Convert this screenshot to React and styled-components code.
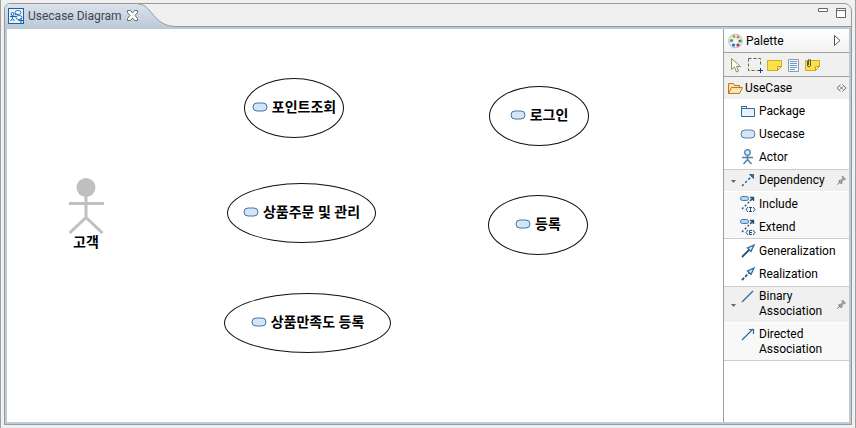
import React from "react";
import styled, { createGlobalStyle } from "styled-components";

const GlobalStyle = createGlobalStyle`
  * { box-sizing: border-box; }
  html, body, #root { height: 100%; }
  body {
    margin: 0;
    background: #f0f0f0;
    color: #000;
    font: 12px/16px Roboto, "Noto Sans CJK KR", sans-serif;
  }
  button { font: inherit; color: inherit; border: 0; padding: 0; background: none; text-align: left; }
  svg { display: block; flex: none; }
`;

const Desktop = styled.div`
  display: flex;
  flex-direction: column;
  height: 100%;
  padding: 3px;
  border: solid #a0a0a0;
  border-width: 0 1px;
`;

const Editor = styled.main`
  flex: 1;
  min-height: 0;
  display: flex;
  flex-direction: column;
  border: 1px solid #999;
  border-radius: 6px 8px 0 0;
  background: #bccad8;
`;

const TabBar = styled.header`
  display: flex;
  height: 23px;
  background: #f0f0f0;
  border-radius: 5px 7px 0 0;
`;

const Tab = styled.div`
  display: flex;
  align-items: center;
  width: 133px;
  padding: 0 0 0 3px;
  gap: 4px;
  border-radius: 5px 0 0 0;
  background: linear-gradient(#dbe3eb, #bccad8);
  color: #3f4654;
  white-space: nowrap;
`;

const TabTitle = styled.h1`
  margin: 0;
  flex: 1;
  font-size: 12px;
  font-weight: 400;
`;

const BarEnd = styled.div`
  flex: 1;
  display: flex;
  justify-content: flex-end;
  gap: 8px;
  padding: 4px 5px 0 0;
  border-bottom: 1px solid #999;
`;

const WindowButton = styled.button`
  display: flex;
  height: 11px;
`;

const Workspace = styled.div`
  flex: 1;
  min-height: 0;
  display: flex;
  margin: 2px;
  background: #fff;
`;

const Canvas = styled.section`
  position: relative;
  flex: 1;
  min-width: 0;
  overflow: hidden;
`;

const ActorNode = styled.figure`
  position: absolute;
  left: ${(p) => p.$x}px;
  top: ${(p) => p.$y}px;
  margin: 0;
  display: flex;
  flex-direction: column;
  align-items: center;
  font-weight: 700;
  font-size: 14px;
`;

const UsecaseNode = styled.div`
  position: absolute;
  left: ${(p) => p.$x}px;
  top: ${(p) => p.$y}px;
  width: ${(p) => p.$w}px;
  height: 60px;
  display: flex;
  align-items: center;
  justify-content: center;
  gap: 4px;
  padding-bottom: 2px;
  border: 1px solid #111;
  border-radius: 50%;
  font-weight: 700;
  font-size: 14px;
  white-space: nowrap;
`;

const Palette = styled.aside`
  width: 126px;
  border-left: 1px solid #a0a0a0;
`;

const PaletteHeader = styled.div`
  display: flex;
  align-items: center;
  gap: 2px;
  height: 24px;
  padding: 0 8px 0 4px;
  background: linear-gradient(#fff, #f2f2f2);
  border-bottom: 1px solid #a0a0a0;
`;

const Grow = styled.span`
  flex: 1;
`;

const Tools = styled.div`
  display: flex;
  align-items: center;
  gap: 3px;
  height: 24px;
  padding: 0 4px;
  background: #f0f0f0;
  border-bottom: 1px solid #a0a0a0;
`;

const Drawer = styled.button`
  display: flex;
  align-items: center;
  gap: 2px;
  width: 100%;
  height: 22px;
  padding: 0 2px 0 3px;
  background: #f0f0f0;
`;

const Group = styled.div`
  padding: ${(p) => (p.$stack ? "0" : "0 0 1px")};
  border-bottom: 1px solid #ccc;
  background: ${(p) => (p.$stack ? "#f8f8f8" : "#fff")};
`;

const Entry = styled.button`
  display: flex;
  align-items: flex-start;
  width: 100%;
  padding: ${(p) => (p.$head ? "2px" : "4px")} 3px 3px 0;
  background: ${(p) => (p.$head ? "#f0f0f0" : "transparent")};
  border-bottom: ${(p) => (p.$head ? "1px solid #fff" : "0")};
  line-height: ${(p) => (p.$tall ? "15px" : "16px")};
`;

const Arrow = styled.span`
  width: 16px;
  align-self: center;
  display: flex;
  justify-content: flex-end;
  padding: 3px 4px 0 0;
`;

const Label = styled.span`
  flex: 1;
  padding-left: 3px;
`;

const PinSlot = styled.span`
  align-self: center;
`;

const Icon = ({ w = 16, h = 16, children }) => (
  <svg width={w} height={h} viewBox={`0 0 ${w} ${h}`} fill="none" aria-hidden="true">{children}</svg>
);

const B = "#2c6a9c";
const N = "#23527c";

const UsecaseGlyph = () => (
  <Icon h={10}><rect x="1" y="1" width="14" height="8" rx="4" fill="#d6e5f5" stroke="#3c79ae" /></Icon>
);

const Dependent = ({ letter }) => (
  <Icon>
    <rect x=".5" y=".5" width="8" height="4" rx="2" fill="#b9d5ef" stroke="#3c79ae" />
    <path d="M2 13 11 4" stroke={N} strokeWidth="1.4" strokeDasharray="2 2" />
    <path d="M10 1.5h3.500V5M13 2l-3 3" stroke={N} strokeWidth="1.4" />
    <path d="m8 11-2 2.500L8 16M13 11l2 2.500L13 16" stroke={N} />
    {letter === "I"
      ? <path d="M9 11.500h3M9 15.500h3M10.500 11.500v4" stroke={N} />
      : <path d="M12 11.500H9.500v4H12M9.500 13.500H12" stroke={N} />}
  </Icon>
);

const icons = {
  package: <Icon><path d="M1.5 13.5v-10h5v2h8v8zM1.5 5.5h5" fill="#e8f1fa" stroke={B} /><path d="M1.5 3.5h5v2h-5z" fill="#fff" stroke={B} /></Icon>,
  usecase: <Icon><rect x="1" y="4" width="14" height="8" rx="4" fill="#d6e5f5" stroke="#5282aa" /></Icon>,
  actor: <Icon><circle cx="7.5" cy="3.5" r="2.8" fill="#dceafa" stroke="#4a7dab" strokeWidth="1.3" /><path d="M7.5 6.5v4L3.5 15M7.5 10.5l4 4.5M2 8.5h11" stroke="#4a7dab" strokeWidth="1.4" /></Icon>,
  dependency: <Icon><path d="M2 14 12 4" stroke={B} strokeWidth="1.5" strokeDasharray="2.5 2" /><path d="M9.5 2.5h4v4z" fill={B} stroke={B} /></Icon>,
  include: <Dependent letter="I" />,
  extend: <Dependent letter="E" />,
  generalization: <Icon><path d="m2 14 8-8" stroke={N} strokeWidth="1.8" /><path d="m14 2-6.5 3 3.5 3.5z" fill="#d6e5f5" stroke={B} strokeWidth="1.3" /></Icon>,
  realization: <Icon><path d="m2 14 8-8" stroke={N} strokeWidth="1.8" strokeDasharray="3 1.5" /><path d="m14 2-6.5 3 3.5 3.5z" fill="#d6e5f5" stroke={B} strokeWidth="1.3" /></Icon>,
  binary: <Icon><path d="M2 13 13 2" stroke={B} strokeWidth="1.2" /></Icon>,
  directed: <Icon><path d="M2 13 13 2M9 2.5h4.5V7" stroke={B} strokeWidth="1.2" /></Icon>,
};

const DiagramIcon = () => (
  <Icon>
    <rect x=".5" y=".5" width="15" height="15" fill="#e8f2fc" stroke="#1b62a5" />
    <ellipse cx="10" cy="4.5" rx="3" ry="2" fill="#fff" stroke="#3978b0" />
    <ellipse cx="11" cy="9.5" rx="3" ry="2" fill="#fff" stroke="#3978b0" />
    <circle cx="4.5" cy="6" r="1.5" stroke="#1b62a5" />
    <path d="M2 8.5h5M4.5 8v2.500L2.500 13M4.500 10.500l2 2.500M7 7l2-1M7 8.500h1M13 10v5M10.500 12.500h5" stroke="#1b62a5" />
  </Icon>
);

const CloseIcon = () => (
  <Icon w={11} h={11}><path d="M.5.5h3l2 2.500 2-2.500h3v2L8 5.500l2.500 3v2h-3l-2-2.500-2 2.500h-3v-2l2.500-3-2.500-3z" fill="#fff" stroke="#6b6b6b" /></Icon>
);

const TabCurve = () => (
  <Icon w={38} h={23}>
    <path d="M0 0C14 0 15 22.500 38 22.500V23H0z" fill="url(#tabFill)" />
    <path d="M0 0C14 0 15 22.500 38 22.500" stroke="#999" />
    <defs><linearGradient id="tabFill" x1="0" y1="0" x2="0" y2="1"><stop stopColor="#dbe3eb" /><stop offset="1" stopColor="#bccad8" /></linearGradient></defs>
  </Icon>
);

const PaletteIcon = () => (
  <Icon>
    <circle cx="7.500" cy="8" r="6.800" fill="#e7f0fa" stroke="#a9bfd7" />
    <circle cx="6" cy="3.500" r="1.500" fill="#d9a400" /><circle cx="10" cy="4" r="1.500" fill="#f07a18" />
    <circle cx="12" cy="8" r="1.600" fill="#2c9a38" /><circle cx="3.500" cy="7.500" r="1.500" fill="#37a34a" />
    <circle cx="5.500" cy="12" r="1.500" fill="#2864bc" /><circle cx="10" cy="12" r="1.600" fill="#c22b3b" /><circle cx="7.500" cy="8" r="1.500" fill="#fff" />
  </Icon>
);

const note = "M1.500 3.500h14v6l-4 4h-10z";
const tools = [
  ["Select", <Icon><path d="M3.500 1.500v11l3-2.500 2 5 2-1-2-4.500h4z" fill="#fffce0" stroke="#8c8c7c" /></Icon>],
  ["Marquee", <Icon><path d="M1.500 1.500h12v8M1.500 1.500v12h9" stroke="#5c6530" strokeDasharray="3 2" /><path d="M13.500 11v5M11 13.500h5" stroke="#173e70" /></Icon>],
  ["Note", <Icon><path d={note} fill="#f9e24a" stroke="#d2ad23" /><path d="M11.500 13.500v-4h4z" fill="#fff1a0" stroke="#c69c1a" /></Icon>],
  ["Text", <Icon><path d="M3.500 2.500h10v12h-10z" fill="#f5faff" stroke="#8c9cab" /><path d="M5 4.500h7M5 6.500h7M5 8.500h7M5 10.500h7M5 12.500h5" stroke="#6f98c2" /></Icon>],
  ["Note attachment", <Icon><path d={note} fill="#f9e24a" stroke="#d2ad23" /><path d="M11.500 13.500v-4h4z" fill="#fff1a0" stroke="#c69c1a" /><path d="M3.500 4v5q1.500 2 3 0V3q-1-2-2 0v5" stroke="#555" /></Icon>],
];

const Pin = () => (
  <Icon w={9} h={9}><path d="m5.500 0 3 3-1 1-1-.3-1.500 1.800.2 1.500-1 1L1.500 5l1-1 1.500.2L5.500 2.500 5 1z" fill="#a5a598" stroke="#77776c" strokeWidth=".6" /><path d="M.5 8.500 3 6" stroke="#666" /></Icon>
);

const groups = [
  { items: [["package", "Package"], ["usecase", "Usecase"], ["actor", "Actor"]] },
  { stack: true, items: [["dependency", "Dependency"], ["include", "Include"], ["extend", "Extend"]] },
  { items: [["generalization", "Generalization"], ["realization", "Realization"]] },
  { stack: true, tall: true, items: [["binary", "Binary Association"], ["directed", "Directed Association"]] },
];

const usecases = [
  { name: "포인트조회", x: 237, y: 49, w: 100 },
  { name: "상품주문 및 관리", x: 220, y: 154, w: 149 },
  { name: "상품만족도 등록", x: 217, y: 264, w: 167 },
  { name: "로그인", x: 482, y: 57, w: 100 },
  { name: "등록", x: 481, y: 166, w: 100 },
];

export default function App() {
  return (
    <>
      <GlobalStyle />
      <Desktop>
        <Editor>
          <TabBar>
            <Tab>
              <DiagramIcon />
              <TabTitle>Usecase Diagram</TabTitle>
              <WindowButton aria-label="Close"><CloseIcon /></WindowButton>
            </Tab>
            <TabCurve />
            <BarEnd>
              <WindowButton aria-label="Minimize"><Icon w={10} h={11}><path d="M.5.500h9v3h-9z" fill="#fff" stroke="#666" /></Icon></WindowButton>
              <WindowButton aria-label="Maximize"><Icon w={10} h={11}><path d="M.5.500h9v9h-9zM.5 2.500h9" fill="#fff" stroke="#666" /></Icon></WindowButton>
            </BarEnd>
          </TabBar>
          <Workspace>
            <Canvas aria-label="Usecase Diagram">
              <ActorNode $x={61} $y={148}>
                <Icon w={36} h={57}>
                  <circle cx="18" cy="10.500" r="9.500" fill="#c0c0c0" />
                  <path d="M18 18v23M1 26.500h35M1.500 56 18 40.500 34.500 56" stroke="#c0c0c0" strokeWidth="3" />
                </Icon>
                <figcaption>고객</figcaption>
              </ActorNode>
              {usecases.map((u) => (
                <UsecaseNode key={u.name} $x={u.x} $y={u.y} $w={u.w}><UsecaseGlyph />{u.name}</UsecaseNode>
              ))}
            </Canvas>
            <Palette>
              <PaletteHeader>
                <PaletteIcon />
                Palette
                <Grow />
                <WindowButton aria-label="Collapse palette"><Icon w={7} h={11}><path d="M.5.500v10l5.500-5z" fill="#fff" stroke="#555" /></Icon></WindowButton>
              </PaletteHeader>
              <Tools>
                {tools.map(([name, icon]) => <button key={name} aria-label={name}>{icon}</button>)}
              </Tools>
              <Drawer>
                <Icon>
                  <path d="M1.500 13.500v-10h5l1 2h5v3" fill="#fbe3a8" stroke="#b87a28" />
                  <path d="m1.500 13.500 3-6h11l-3 6z" fill="#fce6b0" stroke="#b87a28" />
                </Icon>
                UseCase
                <Grow />
                <Icon w={11} h={8}><path d="M4.500.500 1 4l3.500 3.500M6.500.500 10 4 6.500 7.500M4 2.500 5.500 4 4 5.500M7 2.500 5.500 4 7 5.500" stroke="#777" /></Icon>
              </Drawer>
              {groups.map((g) => (
                <Group key={g.items[0][0]} $stack={g.stack}>
                  {g.items.map(([id, label], i) => (
                    <Entry key={id} $head={g.stack && i === 0} $tall={g.tall}>
                      <Arrow>{g.stack && i === 0 && <Icon w={5} h={3}><path d="M0 0h5L2.500 3z" fill="#666" /></Icon>}</Arrow>
                      {icons[id]}
                      <Label>{label}</Label>
                      {g.stack && i === 0 && <PinSlot><Pin /></PinSlot>}
                    </Entry>
                  ))}
                </Group>
              ))}
            </Palette>
          </Workspace>
        </Editor>
      </Desktop>
    </>
  );
}
